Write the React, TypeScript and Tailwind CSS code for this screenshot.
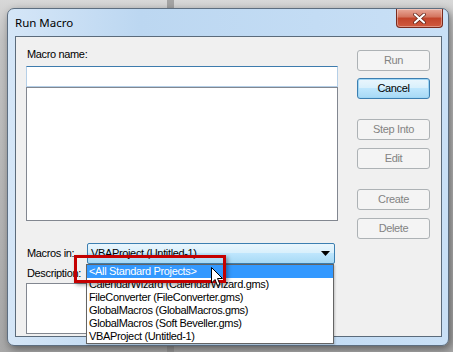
import React from "react";

const body = { fontFamily: '"Liberation Sans", Arial, sans-serif', letterSpacing: "-0.35px" };

function Btn({ label, active, mt }: { label: string; active?: boolean; mt: string }) {
  return (
    <div
      className={`${mt} h-[21px] w-[73px] rounded-[3px] border flex items-center justify-center text-[11px] leading-[13px] ${
        active
          ? "border-[#3c7fb1] text-black bg-[linear-gradient(#eaf6fd_0%,#d9f0fc_45%,#bee6fd_50%,#a7d9f5_100%)] shadow-[inset_0_0_0_1px_#9fd6f5]"
          : "border-[#adb2b5] text-[#838383] bg-[#f4f4f4]"
      }`}
    >
      {label}
    </div>
  );
}

export default function App() {
  const items = [
    "<All Standard Projects>",
    "CalendarWizard (CalendarWizard.gms)",
    "FileConverter (FileConverter.gms)",
    "GlobalMacros (GlobalMacros.gms)",
    "GlobalMacros (Soft Beveller.gms)",
    "VBAProject (Untitled-1)",
  ];
  return (
    <div className="relative w-[453px] h-[352px] overflow-hidden bg-[linear-gradient(#d8d8d8_0px,#c4c4c4_40px,#a8a8a8_352px)]" style={body}>
      <div className="absolute left-[167px] top-0 w-[7px] h-[352px] bg-[#8e8e8e] opacity-70" />
      {/* window */}
      <div className="absolute left-[7px] top-[8px] w-[442px] h-[338px] rounded-[7px] border border-[#5d6e80] bg-[linear-gradient(90deg,#d5e6f7_0%,#bcd7f1_30%,#c3dcf4_70%,#c9e0f6_100%)] shadow-[2px_3px_8px_rgba(0,0,0,0.45)] flex flex-col">
        {/* title bar */}
        <div className="relative h-[27px] shrink-0">
          <div className="absolute left-[7px] top-[7px] leading-[14px] text-black" style={{ fontFamily: '"Noto Sans", "Open Sans", sans-serif', fontSize: "11.5px", letterSpacing: "0px" }}>
            Run Macro
          </div>
          <div className="absolute right-[5px] top-[0px] w-[47px] h-[19px] rounded-b-[4px] border border-t-0 border-[#7a2a1d] bg-[linear-gradient(#e9a899_0%,#d3735d_45%,#c2432a_50%,#d05a3e_100%)] flex items-center justify-center shadow-[inset_0_0_0_1px_rgba(255,255,255,0.35)]">
            <svg width="13" height="11" viewBox="0 0 13 11">
              <path d="M2 1.5 L11 9.5 M11 1.5 L2 9.5" stroke="#5a1d12" strokeWidth="3.6" strokeLinecap="round" />
              <path d="M2 1.5 L11 9.5 M11 1.5 L2 9.5" stroke="#ffffff" strokeWidth="2.2" strokeLinecap="round" />
            </svg>
          </div>
        </div>
        {/* client */}
        <div className="ml-[7px] w-[427px] h-[301px] border border-[#5b6b7b] bg-[#f0f0f0] relative flex">
          <div className="ml-[10px] w-[312px] flex flex-col">
            <div className="mt-[11px] h-[13px] text-[11px] leading-[13px] ml-[1px]">Macro name:</div>
            <div className="mt-[5px] h-[21px] bg-white border border-[#b5cfe7] border-t-[#3d7bad]" />
            <div className="h-[134px] bg-white border border-[#828790]" />
            <div className="mt-[22px] h-[21px] flex items-center relative">
              <div className="w-[60px] ml-[1px] text-[11px] leading-[13px]">Macros in:</div>
              <div className="w-[248px] h-[21px] rounded-[2px] border border-[#3c7fb1] bg-[linear-gradient(#eaf6fd_0%,#d9f0fc_45%,#bee6fd_50%,#a7d9f5_100%)] flex items-center pl-[3px] text-[11px] leading-[13px]">
                <span className="flex-1">VBAProject (Untitled-1)</span>
                <svg width="9" height="5" viewBox="0 0 9 5" className="mr-[4px]">
                  <path d="M0 0 H9 L4.5 5 Z" fill="#000" />
                </svg>
              </div>
              {/* dropdown list */}
              <div className="absolute left-[60px] top-[21px] w-[248px] h-[80px] bg-white border border-[#646464] z-10 flex flex-col shadow-[1px_1px_2px_rgba(0,0,0,0.2)]">
                {items.map((t, i) => (
                  <div
                    key={t}
                    className={`h-[13px] pl-[2px] text-[11px] leading-[13px] whitespace-nowrap ${i === 0 ? "bg-[#3399ff] text-white" : "text-black"}`}
                  >
                    {t}
                  </div>
                ))}
              </div>
            </div>
            <div className="mt-[3px] h-[13px] text-[11px] leading-[13px] ml-[1px]">Description:</div>
            <div className="mt-[3px] h-[51px] w-[290px] bg-white border border-[#828790]" />
          </div>
          <div className="ml-[19px] flex flex-col">
            <Btn label="Run" mt="mt-[13px]" />
            <Btn label="Cancel" active mt="mt-[7px]" />
            <Btn label="Step Into" mt="mt-[20px]" />
            <Btn label="Edit" mt="mt-[8px]" />
            <Btn label="Create" mt="mt-[20px]" />
            <Btn label="Delete" mt="mt-[8px]" />
          </div>
        </div>
      </div>
      {/* red annotation */}
      <div className="absolute left-[74px] top-[255px] w-[152px] h-[28px] border-[3px] border-[#c40000] z-20 shadow-[2px_2px_4px_rgba(0,0,0,0.35)]" />
      {/* cursor */}
      <svg className="absolute left-[211px] top-[267px] z-30" width="13" height="20" viewBox="0 0 13 20">
        <path d="M0.5 0.5 L0.5 16 L4 12.5 L6.5 18.5 L9 17.5 L6.5 11.5 L11.5 11.5 Z" fill="#fff" stroke="#000" strokeWidth="1" strokeLinejoin="round" />
      </svg>
    </div>
  );
}
